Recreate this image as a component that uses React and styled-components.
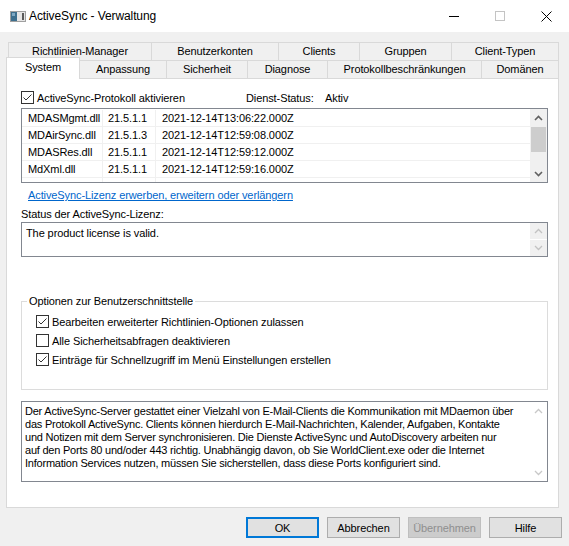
import React from "react";
import styled, { createGlobalStyle } from "styled-components";

const GlobalStyle = createGlobalStyle`
  html, body {
    margin: 0;
    padding: 0;
    background: #f0f0f0;
  }
  body {
    font-family: "Liberation Sans", Arial, sans-serif;
    font-size: 11px;
    letter-spacing: -0.1px;
    color: #000;
  }
  * {
    box-sizing: border-box;
  }
`;

const Window = styled.div`
  width: 569px;
  height: 546px;
  background: #f0f0f0;
  display: flex;
  flex-direction: column;
  overflow: hidden;
`;

const TitleBar = styled.div`
  height: 32px;
  background: #fff;
  display: flex;
  align-items: center;
  flex-shrink: 0;
`;

const AppIcon = styled.svg`
  margin-left: 10px;
  width: 16px;
  height: 16px;
`;

const Title = styled.div`
  margin-left: 3px;
  font-size: 12px;
  letter-spacing: -0.1px;
`;

const Controls = styled.div`
  margin-left: auto;
  display: flex;
  height: 100%;
`;

const CtrlButton = styled.div`
  width: 46px;
  height: 100%;
  display: flex;
  align-items: center;
  justify-content: center;
`;

const Tabs = styled.div`
  margin-top: 10px;
  display: flex;
  flex-direction: column;
`;

const TabRow = styled.div`
  display: flex;
  align-items: flex-end;
  margin-left: ${(p) => p.$indent}px;
  margin-top: ${(p) => p.$lift || 0}px;
`;

const Tab = styled.div`
  width: ${(p) => p.$w}px;
  height: ${(p) => (p.$active ? 22 : 18)}px;
  margin-bottom: ${(p) => (p.$active ? -1 : 0)}px;
  margin-left: -1px;
  &:first-child {
    margin-left: 0;
  }
  border: 1px solid #d9d9d9;
  border-bottom: none;
  background: ${(p) => (p.$active ? "#fff" : "#f0f0f0")};
  position: relative;
  z-index: ${(p) => (p.$active ? 2 : 1)};
  display: flex;
  align-items: center;
  justify-content: center;
  padding-bottom: ${(p) => (p.$active ? 3 : 1)}px;
  white-space: nowrap;
`;

const Panel = styled.div`
  margin-left: 6px;
  width: 553px;
  height: 430px;
  background: #fff;
  border: 1px solid #d9d9d9;
  padding: 12px 10px 0 14px;
  display: flex;
  flex-direction: column;
  flex-shrink: 0;
`;

const TopRow = styled.div`
  height: 13px;
  display: grid;
  grid-template-columns: 225px 79px auto;
  align-items: center;
`;

const CheckLabel = styled.label`
  display: flex;
  align-items: center;
  white-space: nowrap;
  height: ${(p) => p.$h || 13}px;
`;

const Box = styled.svg`
  width: 13px;
  height: 13px;
  margin-right: 3px;
  flex-shrink: 0;
`;

const List = styled.div`
  margin-top: 4px;
  height: 75px;
  border: 1px solid #828790;
  display: flex;
  flex-shrink: 0;
`;

const Rows = styled.div`
  flex: 1;
  overflow: hidden;
  padding-top: 1px;
`;

const Row = styled.div`
  display: grid;
  grid-template-columns: 81px 53px 1fr;
  height: 17px;
  border-bottom: 1px solid #f0f0f0;
`;

const Cell = styled.div`
  padding-left: ${(p) => p.$pad || 6}px;
  line-height: 17px;
  border-right: 1px solid #f0f0f0;
  white-space: nowrap;
  &:last-child {
    border-right: none;
  }
`;

const ScrollBar = styled.div`
  width: 17px;
  background: ${(p) => p.$bg || "#f0f0f0"};
  display: flex;
  flex-direction: column;
  justify-content: space-between;
  flex-shrink: 0;
`;

const ArrowBtn = styled.div`
  width: 17px;
  height: ${(p) => p.$h || 17}px;
  display: flex;
  align-items: center;
  justify-content: center;
  background: ${(p) => p.$bg || "transparent"};
`;

const Track = styled.div`
  flex: 1;
  padding: 1px 1px 0;
`;

const Thumb = styled.div`
  height: 25px;
  background: #cdcdcd;
`;

const Link = styled.a`
  margin-top: 5px;
  padding-left: 7px;
  line-height: 14px;
  color: #0066cc;
  text-decoration: underline;
  white-space: nowrap;
`;

const FieldLabel = styled.div`
  margin-top: 5px;
  line-height: 14px;
`;

const TextBox = styled.div`
  margin-top: ${(p) => p.$mt}px;
  height: ${(p) => p.$h}px;
  border: 1px solid #828790;
  display: flex;
  flex-shrink: 0;
`;

const TextContent = styled.div`
  flex: 1;
  padding: ${(p) => p.$pad};
  line-height: ${(p) => p.$lh}px;
  letter-spacing: ${(p) => p.$ls || -0.1}px;
  white-space: nowrap;
  overflow: hidden;
`;

const Group = styled.fieldset`
  margin: 37px 0 0;
  padding: 4px 0 20px 14px;
  border: 1px solid #dcdcdc;
  min-width: 0;
`;

const Legend = styled.legend`
  margin-left: -9px;
  padding: 0 2px;
  line-height: 14px;
`;

const Buttons = styled.div`
  margin-top: 9px;
  padding-right: 7px;
  display: flex;
  justify-content: flex-end;
  gap: 8px;
`;

const Button = styled.div`
  width: 73px;
  height: 21px;
  display: flex;
  align-items: center;
  justify-content: center;
  background: ${(p) => (p.$disabled ? "#cccccc" : "#e1e1e1")};
  border: ${(p) =>
    p.$default ? "2px solid #0078d7" : p.$disabled ? "1px solid #bfbfbf" : "1px solid #adadad"};
  color: ${(p) => (p.$disabled ? "#8f8f8f" : "#000")};
`;

const Check = ({ on }) => (
  <Box viewBox="0 0 13 13">
    <rect x="0.5" y="0.5" width="12" height="12" fill="#fff" stroke="#333" />
    {on && <polyline points="2.5,6.5 5,9 10.5,3.5" fill="none" stroke="#333" strokeWidth="1" />}
  </Box>
);

const Chevron = ({ up, color = "#606060", w = 1.6 }) => (
  <svg width="9" height="6" viewBox="0 0 9 6">
    <polyline
      points={up ? "1,5 4.5,1.5 8,5" : "1,1 4.5,4.5 8,1"}
      fill="none"
      stroke={color}
      strokeWidth={w}
    />
  </svg>
);

const files = [
  ["MDASMgmt.dll", "21.5.1.1", "2021-12-14T13:06:22.000Z"],
  ["MDAirSync.dll", "21.5.1.3", "2021-12-14T12:59:08.000Z"],
  ["MDASRes.dll", "21.5.1.1", "2021-12-14T12:59:12.000Z"],
  ["MdXml.dll", "21.5.1.1", "2021-12-14T12:59:16.000Z"],
  ["", "", ""],
];

const topTabs = [
  ["Richtlinien-Manager", 144],
  ["Benutzerkonten", 128],
  ["Clients", 82],
  ["Gruppen", 93],
  ["Client-Typen", 108],
];

const bottomTabs = [
  ["System", 74, true],
  ["Anpassung", 88],
  ["Sicherheit", 82],
  ["Diagnose", 81],
  ["Protokollbeschränkungen", 155],
  ["Domänen", 78],
];

const description = [
  "Der ActiveSync-Server gestattet einer Vielzahl von E-Mail-Clients die Kommunikation mit MDaemon über",
  "das Protokoll ActiveSync. Clients können hierdurch E-Mail-Nachrichten, Kalender, Aufgaben, Kontakte",
  "und Notizen mit dem Server synchronisieren. Die Dienste ActiveSync und AutoDiscovery arbeiten nur",
  "auf den Ports 80 und/oder 443 richtig. Unabhängig davon, ob Sie WorldClient.exe oder die Internet",
  "Information Services nutzen, müssen Sie sicherstellen, dass diese Ports konfiguriert sind.",
];

export default function App() {
  return (
    <Window>
      <GlobalStyle />
      <TitleBar>
        <AppIcon viewBox="0 0 16 16">
          <rect x="0.5" y="3.5" width="15" height="10" fill="#e6e6e6" stroke="#a0a0a0" />
          <rect x="1" y="4" width="6" height="9" fill="#3d6f8e" />
          <rect x="2" y="5" width="3" height="3" fill="#7fa9c4" />
          <rect x="12" y="5" width="2" height="7" fill="#5a5a5a" />
        </AppIcon>
        <Title>ActiveSync - Verwaltung</Title>
        <Controls>
          <CtrlButton>
            <svg width="10" height="10" viewBox="0 0 10 10">
              <line x1="0" y1="5.5" x2="10" y2="5.5" stroke="#000" />
            </svg>
          </CtrlButton>
          <CtrlButton>
            <svg width="10" height="10" viewBox="0 0 10 10">
              <rect x="0.5" y="0.5" width="9" height="9" fill="none" stroke="#c4c4c4" />
            </svg>
          </CtrlButton>
          <CtrlButton>
            <svg width="11" height="11" viewBox="0 0 11 11">
              <path d="M0.5 0.5 L10.5 10.5 M10.5 0.5 L0.5 10.5" stroke="#000" />
            </svg>
          </CtrlButton>
        </Controls>
      </TitleBar>

      <Tabs>
        <TabRow $indent={8}>
          {topTabs.map(([t, w]) => (
            <Tab key={t} $w={w}>
              {t}
            </Tab>
          ))}
        </TabRow>
        <TabRow $indent={6} $lift={-3}>
          {bottomTabs.map(([t, w, a]) => (
            <Tab key={t} $w={w} $active={a}>
              {t}
            </Tab>
          ))}
        </TabRow>
      </Tabs>

      <Panel>
        <TopRow>
          <CheckLabel>
            <Check on />
            ActiveSync-Protokoll aktivieren
          </CheckLabel>
          <span>Dienst-Status:</span>
          <span>Aktiv</span>
        </TopRow>

        <List>
          <Rows>
            {files.map((f, i) => (
              <Row key={i}>
                <Cell>{f[0]}</Cell>
                <Cell $pad={5}>{f[1]}</Cell>
                <Cell>{f[2]}</Cell>
              </Row>
            ))}
          </Rows>
          <ScrollBar>
            <ArrowBtn>
              <Chevron up />
            </ArrowBtn>
            <Track>
              <Thumb />
            </Track>
            <ArrowBtn>
              <Chevron />
            </ArrowBtn>
          </ScrollBar>
        </List>

        <Link>ActiveSync-Lizenz erwerben, erweitern oder verlängern</Link>
        <FieldLabel>Status der ActiveSync-Lizenz:</FieldLabel>
        <TextBox $mt={1} $h={35}>
          <TextContent $pad="3px 4px" $lh={14}>
            The product license is valid.
          </TextContent>
          <ScrollBar $bg="#fff">
            <ArrowBtn $h={16} $bg="#f0f0f0">
              <Chevron up color="#c2c2c2" w={1.3} />
            </ArrowBtn>
            <ArrowBtn $h={16} $bg="#f0f0f0">
              <Chevron color="#c2c2c2" w={1.3} />
            </ArrowBtn>
          </ScrollBar>
        </TextBox>

        <Group>
          <Legend>Optionen zur Benutzerschnittstelle</Legend>
          <CheckLabel $h={19}>
            <Check on />
            Bearbeiten erweiterter Richtlinien-Optionen zulassen
          </CheckLabel>
          <CheckLabel $h={19}>
            <Check />
            Alle Sicherheitsabfragen deaktivieren
          </CheckLabel>
          <CheckLabel $h={19}>
            <Check on />
            Einträge für Schnellzugriff im Menü Einstellungen erstellen
          </CheckLabel>
        </Group>

        <TextBox $mt={11} $h={81}>
          <TextContent $pad="3px 3px" $lh={13} $ls={-0.22}>
            {description.map((l, i) => (
              <div key={i}>{l}</div>
            ))}
          </TextContent>
          <ScrollBar $bg="#fff">
            <ArrowBtn>
              <Chevron up color="#c8c8c8" w={1.3} />
            </ArrowBtn>
            <ArrowBtn>
              <Chevron color="#c8c8c8" w={1.3} />
            </ArrowBtn>
          </ScrollBar>
        </TextBox>
      </Panel>

      <Buttons>
        <Button $default>OK</Button>
        <Button>Abbrechen</Button>
        <Button $disabled>Übernehmen</Button>
        <Button>Hilfe</Button>
      </Buttons>
    </Window>
  );
}
